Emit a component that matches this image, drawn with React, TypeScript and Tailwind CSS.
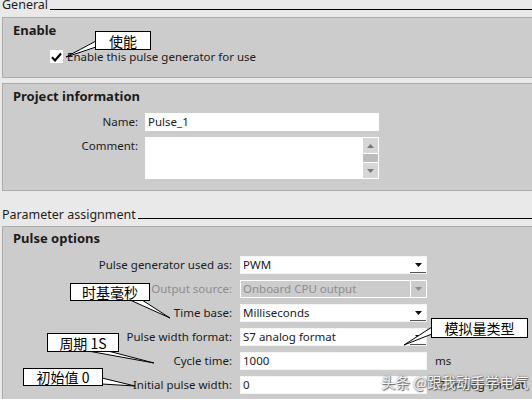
import React from 'react';
import clsx from 'clsx';

function Arrow({ up, color }: { up?: boolean; color: string }) {
  return (
    <svg width="7" height="4" viewBox="0 0 7 4">
      <path d={up ? 'M0 4h7L3.5 0z' : 'M0 0h7L3.5 4z'} fill={color} />
    </svg>
  );
}

function Select({ value, disabled }: { value: string; disabled?: boolean }) {
  return (
    <div
      className={clsx(
        'flex h-[18px] w-[187px] border',
        disabled ? 'border-white bg-[#cccccc] text-[#8e8e8e]' : 'border-[#f4f4f4] bg-white text-[#1b1b1b]'
      )}
    >
      <span className="flex-1 pl-[2px] leading-[16px]">{value}</span>
      {disabled ? (
        <span className="flex w-[16px] items-center justify-center border-l border-white">
          <Arrow color="#8c8c8c" />
        </span>
      ) : (
        <span className="flex h-[16px] w-[16px] items-center justify-center border-b border-[#555555]">
          <Arrow color="#111111" />
        </span>
      )}
    </div>
  );
}

function Field({ value }: { value: string }) {
  return (
    <div className="h-[18px] w-[187px] border border-[#f4f4f4] bg-white pl-[2px] leading-[16px]">{value}</div>
  );
}

function Row({ label, muted, children }: { label: string; muted?: boolean; children: React.ReactNode }) {
  return (
    <div className="flex h-[18px] items-center">
      <span className={clsx('w-[219px] text-right leading-[18px]', muted && 'text-[#8c8c8c]')}>{label}</span>
      <div className="ml-[8px] flex items-center">{children}</div>
    </div>
  );
}

function SectionHeader({ title, tall }: { title: string; tall?: boolean }) {
  return (
    <div className={clsx('flex pl-[2px]', tall ? 'h-[35px]' : 'h-[17px]')}>
      <span className={clsx('text-[12.5px] leading-[14px] text-[#1e1e1e]', tall ? 'mt-[17px]' : '-mt-[2px]')}>
        {title}
      </span>
      <div className={clsx('ml-[2px] flex-1 border-b border-black', tall ? 'h-[28px]' : 'h-[10px]')} />
    </div>
  );
}

const boxCls =
  "absolute flex items-center justify-center border border-black bg-white font-['Noto_Sans_CJK_SC',sans-serif] text-[14px] leading-none text-black";

export default function App() {
  return (
    <div className="relative h-[399px] w-[532px] overflow-hidden bg-[#e9e9e9] font-['Noto_Sans','Noto_Sans_CJK_SC',sans-serif] text-[11.5px] text-[#1b1b1b]">
      <SectionHeader title="General" />

      {/* Enable */}
      <div className="ml-[2px] h-[61px] border-y border-l border-[#ababab] bg-[#cccccc] pl-[10px] pt-[4px]">
        <div className="text-[13px] font-bold leading-[17px]">Enable</div>
        <div className="mt-[11px] flex items-center pl-[37px]">
          <span className="flex h-[13px] w-[13px] items-center justify-center bg-white">
            <svg width="11" height="10" viewBox="0 0 11 10">
              <path d="M1 5.2l3 3.2L10 1.5" fill="none" stroke="#000" strokeWidth="2.2" />
            </svg>
          </span>
          <span className="ml-[4px] leading-[13px]">Enable this pulse generator for use</span>
        </div>
      </div>

      {/* Project information */}
      <div className="ml-[2px] mt-[5px] h-[108px] border-y border-l border-[#ababab] bg-[#cccccc] pl-[10px] pt-[4px]">
        <div className="text-[13px] font-bold leading-[17px]">Project information</div>
        <div className="mt-[8px] flex">
          <span className="w-[125px] text-right leading-[18px]">Name:</span>
          <div className="ml-[7px] h-[18px] w-[234px] bg-white pl-[3px] leading-[18px]">Pulse_1</div>
        </div>
        <div className="mt-[6px] flex">
          <span className="w-[125px] text-right leading-[18px]">Comment:</span>
          <div className="ml-[7px] flex h-[42px] w-[234px] justify-end bg-white p-px">
            <div className="flex w-[15px] flex-col gap-px">
              <span className="flex h-[15px] items-center justify-center bg-[#d6d6d6]">
                <Arrow up color="#7a7a7a" />
              </span>
              <span className="flex-1 bg-[#bdbdbd]" />
              <span className="flex h-[15px] items-center justify-center bg-[#d6d6d6]">
                <Arrow color="#7a7a7a" />
              </span>
            </div>
          </div>
        </div>
      </div>

      <SectionHeader title="Parameter assignment" tall />

      {/* Pulse options */}
      <div className="ml-[2px] h-[180px] border-t border-l border-[#ababab] bg-[#cccccc] pl-[10px] pt-[3px]">
        <div className="text-[13px] font-bold leading-[17px]">Pulse options</div>
        <div className="mt-[9px] flex flex-col gap-[6px]">
          <Row label="Pulse generator used as:">
            <Select value="PWM" />
          </Row>
          <Row label="Output source:" muted>
            <Select value="Onboard CPU output" disabled />
          </Row>
          <Row label="Time base:">
            <Select value="Milliseconds" />
          </Row>
          <Row label="Pulse width format:">
            <Select value="S7 analog format" />
          </Row>
          <Row label="Cycle time:">
            <Field value="1000" />
            <span className="ml-[8px]">ms</span>
          </Row>
          <Row label="Initial pulse width:">
            <Field value="0" />
            <span className="ml-[5px]">S7 analog format</span>
          </Row>
        </div>
      </div>

      {/* callout tails */}
      <svg className="pointer-events-none absolute left-0 top-0" width="532" height="399">
        <g fill="#fff" stroke="#000" strokeWidth="1">
          <polygon points="96,41 66,57 96,47" />
          <polygon points="130,300 170,318 142,300" />
          <polygon points="88,351 154,363 108,351" />
          <polygon points="102,378 135,386 102,384" />
          <polygon points="432,327 404,345 432,334" />
        </g>
      </svg>
      <div className={clsx(boxCls, 'left-[95px] top-[31px] h-[19px] w-[56px]')}>使能</div>
      <div className={clsx(boxCls, 'left-[70px] top-[283px] h-[18px] w-[80px]')}>时基毫秒</div>
      <div className={clsx(boxCls, 'left-[47px] top-[333px] h-[19px] w-[72px]')}>周期 1S</div>
      <div className={clsx(boxCls, 'left-[23px] top-[368px] h-[18px] w-[80px]')}>初始值 0</div>
      <div className={clsx(boxCls, 'left-[431px] top-[318px] h-[20px] w-[97px]')}>模拟量类型</div>

      {/* watermark */}
      <div className="pointer-events-none absolute left-[381px] top-[373px] font-['Noto_Sans_CJK_SC',sans-serif] text-[14.5px] leading-[17px] text-white/90 [text-shadow:0_0_2px_#555,1px_1px_1px_#666]">
        头条 @跟我动手学电气
      </div>
    </div>
  );
}
